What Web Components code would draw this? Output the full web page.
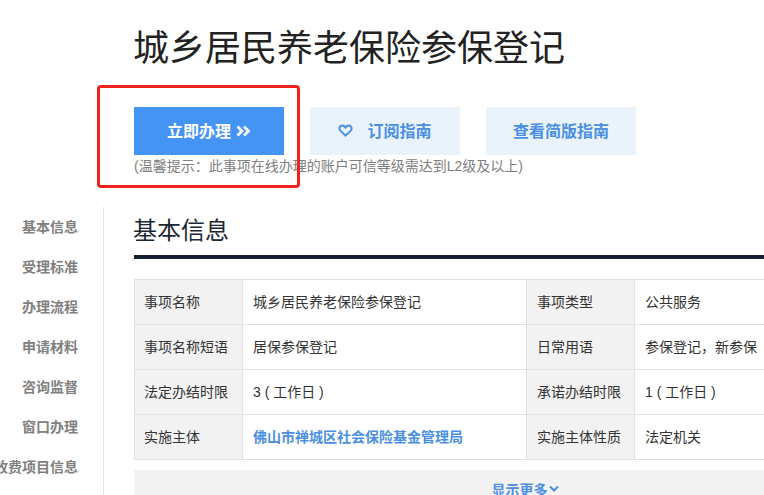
<!DOCTYPE html>
<html lang="zh">
<head>
<meta charset="utf-8">
<style>
html, body { margin: 0; padding: 0; background: #fff; overflow: hidden; height: 495px; }
body { font-family: "Liberation Sans", "Noto Sans CJK SC", sans-serif; }
</style>
</head>
<body>
<guide-page></guide-page>
<script>
class ActionButton extends HTMLElement {
    constructor() {
        super();
        this.attachShadow({mode: "open"}).innerHTML = `
        <style>
            :host {
                display: flex;
                align-items: center;
                justify-content: center;
                box-sizing: border-box;
                width: 150px;
                height: 48px;
                padding-bottom: 2px;
                background: #eaf3fc;
                color: #4a8fe3;
                font-size: 16px;
                font-weight: bold;
            }
            :host([primary]) { background: #4394f5; color: #fff; }
        </style>
        <slot></slot>`;
    }
}
customElements.define("action-button", ActionButton);

class SideNav extends HTMLElement {
    constructor() {
        super();
        this.attachShadow({mode: "open"}).innerHTML = `
        <style>
            :host {
                display: flex;
                flex-direction: column;
                box-sizing: border-box;
                width: 104px;
                height: 288px;
                padding-right: 25px;
                border-right: 1px solid #e4e4e4;
                color: #808080;
                font-size: 14px;
                font-weight: bold;
            }
            div {
                display: flex;
                justify-content: flex-end;
                white-space: nowrap;
                height: 40px;
                line-height: 40px;
            }
        </style>
        ${["基本信息", "受理标准", "办理流程", "申请材料", "咨询监督", "窗口办理", "收费项目信息"].map(t => `<div>${t}</div>`).join("")}`;
    }
}
customElements.define("side-nav", SideNav);

class InfoTable extends HTMLElement {
    constructor() {
        super();
        const rows = [
            ["事项名称", "城乡居民养老保险参保登记", "事项类型", "公共服务"],
            ["事项名称短语", "居保参保登记", "日常用语", "参保登记，新参保"],
            ["法定办结时限", "3 ( 工作日 )", "承诺办结时限", "1 ( 工作日 )"],
            ["实施主体", "<b>佛山市禅城区社会保险基金管理局</b>", "实施主体性质", "法定机关"]
        ];
        this.attachShadow({mode: "open"}).innerHTML = `
        <style>
            :host { display: block; width: 782px; }
            .grid {
                display: grid;
                grid-template-columns: 108px 284px 108px 282px;
                grid-auto-rows: 45px;
                border-top: 1px solid #e2e2e2;
                border-left: 1px solid #e2e2e2;
                color: #333;
                font-size: 14px;
            }
            .grid > div {
                display: flex;
                align-items: center;
                box-sizing: border-box;
                padding: 0 0 2px 10px;
                border-right: 1px solid #e2e2e2;
                border-bottom: 1px solid #e2e2e2;
                white-space: nowrap;
            }
            .grid > .k { background: #f2f2f2; }
            .grid > .first { padding-left: 9px; }
            b { color: #4a8fe3; }
            .more {
                display: flex;
                align-items: center;
                justify-content: center;
                gap: 1px;
                box-sizing: border-box;
                height: 40px;
                margin-top: 10px;
                padding-bottom: 2px;
                background: #f3f3f3;
                color: #4a8fe3;
                font-size: 14px;
                font-weight: bold;
            }
            svg { width: 10px; height: 8px; }
        </style>
        <div class="grid">
            ${rows.map(r => `
                <div class="k first">${r[0]}</div><div>${r[1]}</div>
                <div class="k">${r[2]}</div><div>${r[3]}</div>`).join("")}
        </div>
        <div class="more">显示更多<svg viewBox="0 0 10 8"><path d="M1 1.5l4 4 4-4" fill="none" stroke="#4a8fe3" stroke-width="2"/></svg></div>`;
    }
}
customElements.define("info-table", InfoTable);

class GuidePage extends HTMLElement {
    constructor() {
        super();
        this.attachShadow({mode: "open"}).innerHTML = `
        <style>
            :host {
                display: block;
                position: relative;
                width: 764px;
                height: 495px;
                overflow: hidden;
            }
            .top { padding: 26px 0 0 134px; }
            h1 {
                margin: 0 0 0 -1px;
                height: 46px;
                line-height: 46px;
                font-size: 36px;
                font-weight: normal;
                color: #222;
                white-space: nowrap;
            }
            .actions { display: flex; gap: 26px; margin-top: 35px; }
            .tip {
                height: 22px;
                line-height: 22px;
                font-size: 14px;
                color: #808080;
                white-space: nowrap;
            }
            .body { display: flex; margin-top: 30px; }
            .main { margin-left: 30px; }
            h2 {
                margin: 0;
                height: 52px;
                line-height: 48px;
                text-indent: -1px;
                width: 630px;
                box-sizing: border-box;
                font-size: 24px;
                font-weight: normal;
                color: #1d2733;
                border-bottom: 4px solid #14202e;
            }
            info-table { margin-top: 20px; }
            .mark {
                position: absolute;
                left: 97px;
                top: 85px;
                width: 203px;
                height: 103px;
                box-sizing: border-box;
                border: 3px solid #f0231c;
                border-radius: 4px;
            }
            svg { display: block; }
        </style>
        <div class="top">
            <h1>城乡居民养老保险参保登记</h1>
            <div class="actions">
                <action-button primary>立即办理<svg width="15" height="12" viewBox="0 0 15 12" style="margin-left:5px;margin-top:1px"><path d="M1.5 1.5l4.5 4.5-4.5 4.5M8 1.5l4.5 4.5-4.5 4.5" fill="none" stroke="#fff" stroke-width="2.8"/></svg></action-button>
                <action-button><svg width="15" height="13" viewBox="0 0 15 13" style="margin-right:14px"><path d="M7.5 11.6L2.3 6.6C.6 4.8 1.6 1.6 4.2 1.6c1.5 0 2.6.8 3.3 2 .7-1.2 1.8-2 3.3-2 2.6 0 3.6 3.2 1.9 5z" fill="none" stroke="#4a8fe3" stroke-width="2"/></svg>订阅指南</action-button>
                <action-button>查看简版指南</action-button>
            </div>
            <div class="tip">(温馨提示：此事项在线办理的账户可信等级需达到L2级及以上)</div>
        </div>
        <div class="body">
            <side-nav></side-nav>
            <div class="main">
                <h2>基本信息</h2>
                <info-table></info-table>
            </div>
        </div>
        <div class="mark"></div>`;
    }
}
customElements.define("guide-page", GuidePage);
</script>
</body>
</html>
